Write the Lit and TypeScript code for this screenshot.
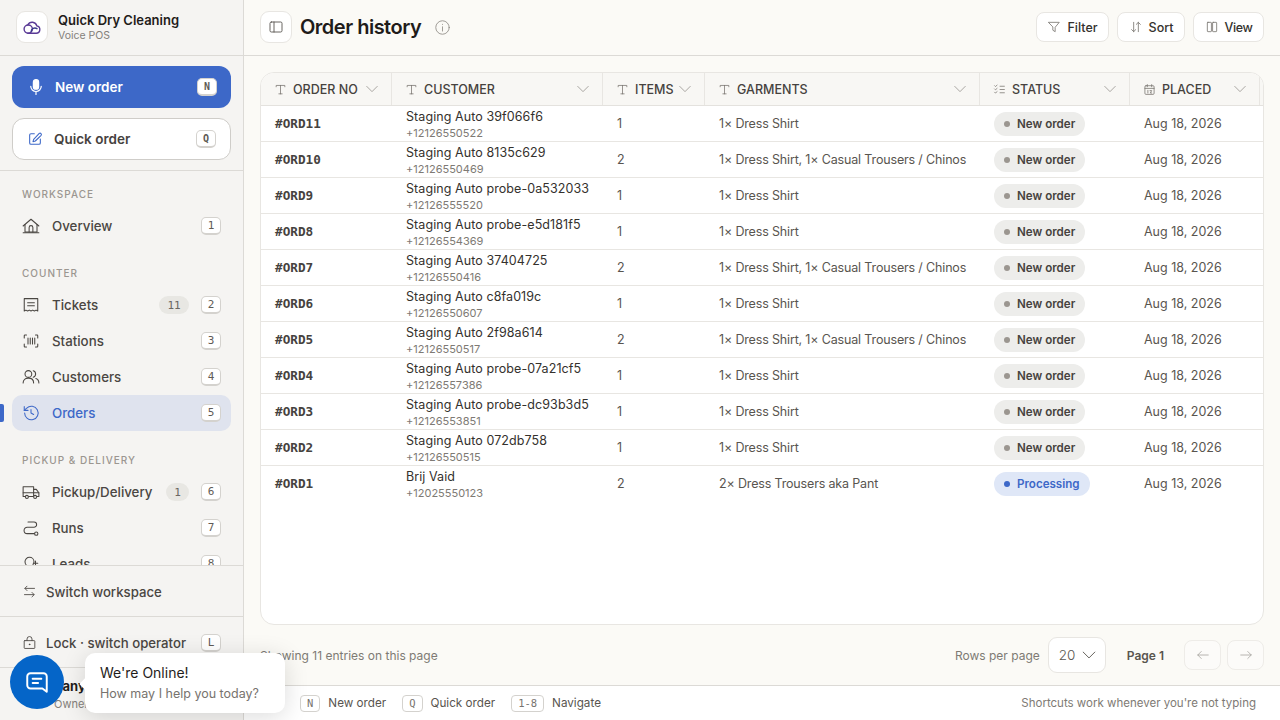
import { LitElement, html, css, svg } from "lit";
import { customElement } from "lit/decorators.js";

const ic = (p: unknown, size = 18, sw = 1.4) => html`<svg class="ic" width=${size} height=${size} viewBox="0 0 24 24" fill="none" stroke="currentColor" stroke-width=${sw} stroke-linecap="round" stroke-linejoin="round">${p}</svg>`;

const I = {
  mic: svg`<rect x="8.5" y="2" width="7" height="13" rx="3.5" fill="currentColor"/><path d="M5 11a7 7 0 0 0 14 0M12 18v4"/>`,
  edit: svg`<path d="M11 4H6a2 2 0 0 0-2 2v12a2 2 0 0 0 2 2h12a2 2 0 0 0 2-2v-6"/><path d="M18.4 3.6a2 2 0 0 1 2.8 2.8L12.5 15 9 16l1-3.500z"/>`,
  home: svg`<path d="M1.500 12 12 3l10.500 9"/><path d="M4 10v10h16V10"/><path d="M1.500 21h21"/><path d="M9.500 20v-6a2.500 2.500 0 0 1 5 0v6"/>`,
  ticket: svg`<path d="M3 3.500h18V20l-2.250-1.200L16.500 20l-2.250-1.200L12 20l-2.250-1.200L7.500 20l-2.250-1.200L3 20z"/><path d="M7.500 9h9M7.500 13h9"/>`,
  scan: svg`<path d="M3 8V5a1 1 0 0 1 1-1h2M18 4h2a1 1 0 0 1 1 1v3M21 16v3a1 1 0 0 1-1 1h-2M6 20H4a1 1 0 0 1-1-1v-3"/><path d="M8 8v8M11 8v8M14 8v8M17 8v8"/>`,
  users: svg`<circle cx="8.500" cy="8" r="4.500"/><path d="M1.500 20c0-4 3-6.500 7-6.500s7 2.500 7 6.500"/><path d="M15 3.700a4.500 4.500 0 0 1 0 8.600M18.500 14c2.500.8 4 3 4 6"/>`,
  history: svg`<path d="M3.500 12a9 9 0 1 0 2.800-6.500L3 8.500"/><path d="M3 3.500v5h5"/><path d="M12 7.500V12l3.500 2"/>`,
  truck: svg`<path d="M1.500 5h14v13h-14z"/><path d="M15.500 8.500h3.500l3.500 4.500v5h-7"/><path d="M1.500 13h21"/><circle cx="6.500" cy="18.500" r="2" fill="#f5f4f2"/><circle cx="17.500" cy="18.500" r="2" fill="#f5f4f2"/>`,
  route: svg`<path d="M8 4h8a3.500 3.500 0 0 1 0 7H7a4 4 0 0 0 0 8.500h9.500"/><circle cx="19" cy="19.500" r="2.200"/>`,
  lead: svg`<circle cx="10" cy="9" r="6"/><path d="M18 8v6M15 11h6"/>`,
  sw: svg`<path d="M20 7H5M8 3.500 4.500 7 8 10.500" /><path d="M4 17h15M16 13.500l3.500 3.500-3.500 3.500"/>`,
  lock: svg`<rect x="3.500" y="9" width="17" height="12.500" rx="1"/><path d="M8 9V6.500a4 4 0 0 1 8 0V9"/><circle cx="12" cy="15" r=".6" fill="currentColor"/>`,
  panel: svg`<rect x="3" y="4.500" width="18" height="15" rx="2"/><path d="M9 4.500v15"/>`,
  info: svg`<circle cx="12" cy="12" r="9.500"/><path d="M12 11v6M12 7.500v.2"/>`,
  filter: svg`<path d="M3 4h18l-7 8.500V20l-4-2.500v-5z"/>`,
  sort: svg`<path d="M8 4v16M4.500 16.500 8 20l3.500-3.500M16 20V4M12.500 7.500 16 4l3.500 3.500"/>`,
  view: svg`<rect x="4" y="4" width="7" height="16" rx="1"/><rect x="13" y="4" width="7" height="16" rx="1"/>`,
  t: svg`<path d="M4 7V4.500h16V7M12 4.500V20M9 20h6"/>`,
  chev: svg`<path d="m5 8.500 7 7 7-7"/>`,
  list: svg`<path d="M13 6h8M13 12h8M13 18h8"/><path d="m3 5 1.500 1.500L7.500 4M3 11l1.500 1.500L7.500 10M3 17l1.500 1.500L7.500 16"/>`,
  cal: svg`<rect x="3.500" y="5" width="17" height="16" rx="2"/><path d="M3.500 10h17M8 3v4M16 3v4"/><path d="M9 13.500v5M13 14h3l-2.500 4.500H16"/>`,
  left: svg`<path d="M21 12H3M9 6l-6 6 6 6"/>`,
  right: svg`<path d="M3 12h18M15 6l6 6-6 6"/>`,
  chat: svg`<path d="M6 4h12a3 3 0 0 1 3 3v14l-4-3H6a3 3 0 0 1-3-3V7a3 3 0 0 1 3-3z"/><path d="M8 9h8M8 13h5"/>`,
};

const rows: [string, string, string, number, string, string, string][] = [
  ["#ORD11", "Staging Auto 39f066f6", "+12126550522", 1, "1× Dress Shirt", "New order", "Aug 18, 2026"],
  ["#ORD10", "Staging Auto 8135c629", "+12126550469", 2, "1× Dress Shirt, 1× Casual Trousers / Chinos", "New order", "Aug 18, 2026"],
  ["#ORD9", "Staging Auto probe-0a532033", "+12126555520", 1, "1× Dress Shirt", "New order", "Aug 18, 2026"],
  ["#ORD8", "Staging Auto probe-e5d181f5", "+12126554369", 1, "1× Dress Shirt", "New order", "Aug 18, 2026"],
  ["#ORD7", "Staging Auto 37404725", "+12126550416", 2, "1× Dress Shirt, 1× Casual Trousers / Chinos", "New order", "Aug 18, 2026"],
  ["#ORD6", "Staging Auto c8fa019c", "+12126550607", 1, "1× Dress Shirt", "New order", "Aug 18, 2026"],
  ["#ORD5", "Staging Auto 2f98a614", "+12126550517", 2, "1× Dress Shirt, 1× Casual Trousers / Chinos", "New order", "Aug 18, 2026"],
  ["#ORD4", "Staging Auto probe-07a21cf5", "+12126557386", 1, "1× Dress Shirt", "New order", "Aug 18, 2026"],
  ["#ORD3", "Staging Auto probe-dc93b3d5", "+12126553851", 1, "1× Dress Shirt", "New order", "Aug 18, 2026"],
  ["#ORD2", "Staging Auto 072db758", "+12126550515", 1, "1× Dress Shirt", "New order", "Aug 18, 2026"],
  ["#ORD1", "Brij Vaid", "+12025550123", 2, "2× Dress Trousers aka Pant", "Processing", "Aug 13, 2026"],
];

const cols: [string, unknown][] = [
  ["ORDER NO", I.t], ["CUSTOMER", I.t], ["ITEMS", I.t], ["GARMENTS", I.t], ["STATUS", I.list], ["PLACED", I.cal],
];

@customElement("app-root")
export class AppRoot extends LitElement {
  static styles = css`
    :host { display: flex; width: 1280px; height: 720px; overflow: hidden; position: relative; font-family: Inter, "Liberation Sans", sans-serif; color: #1f1c1a; background: #fbfaf6; }
    * { box-sizing: border-box; }
    .ic { display: block; flex: none; }

    aside { width: 244px; flex: none; background: #f5f4f2; border-right: 1px solid #dcdad6; display: flex; flex-direction: column; height: 720px; }
    .brand { height: 56px; flex: none; border-bottom: 1px solid #dcdad6; display: flex; align-items: center; gap: 10px; padding: 0 16px 1px; }
    .logo { width: 32px; height: 32px; border-radius: 9px; background: #fff; border: 1px solid #e8e6e2; display: flex; align-items: center; justify-content: center; }
    .brand b { display: block; font-size: 13px; font-weight: 600; line-height: 17px; }
    .brand span { display: block; font-size: 10.500px; line-height: 13px; color: #84807a; }
    .cta { flex: none; height: 115px; padding: 10px 12px; border-bottom: 1px solid #dcdad6; display: flex; flex-direction: column; gap: 10px; }
    .btn { height: 42px; border-radius: 12px; display: flex; align-items: center; font-size: 13.500px; font-weight: 600; padding: 0 14px 0 15px; }
    .btn .g { flex: 1; }
    .btn.pri { background: #3d68c8; color: #fff; gap: 10px; }
    .btn.sec { background: #fff; border: 1px solid #cfcdc9; color: #46423e; gap: 11px; padding-left: 14px; }
    kbd { font-family: "DejaVu Sans Mono", "Liberation Mono", monospace; font-size: 11px; font-weight: 400; color: #5f5b56; display: flex; align-items: center; justify-content: center; flex: none; height: 18px; min-width: 20px; padding: 0 5px; border-radius: 5px; background: #fff; border: 1px solid #d4d2ce; border-bottom-width: 2px; }
    .btn kbd { font-weight: 700; font-size: 10px; }
    .nav { flex: 1; min-height: 0; overflow: hidden; padding: 0 12px; }
    .lab { font-size: 10px; font-weight: 500; letter-spacing: .1em; color: #9b9690; height: 14px; line-height: 14px; padding-left: 10px; }
    .lab.first { margin-top: 16px; }
    .lab.next { margin-top: 22px; }
    .lab + .it { margin-top: 7px; }
    .it { height: 36px; border-radius: 10px; display: flex; align-items: center; padding: 0 10px; font-size: 13.300px; color: #4a4642; gap: 12px; position: relative; font-weight: 450; }
    .it .g { flex: 1; white-space: nowrap; }
    .it.on { background: #dfe3ee; color: #3d68c8; font-weight: 500; }
    .it.on::before { content: ""; position: absolute; left: -12px; top: 9px; width: 4px; height: 18px; background: #3d68c8; border-radius: 0 2px 2px 0; }
    .cnt { font-family: "DejaVu Sans Mono", monospace; font-size: 11px; color: #6b6762; background: #e8e7e3; border-radius: 9px; height: 18px; display: flex; flex: none; align-items: center; justify-content: center; }
    .sec-row { flex: none; height: 51px; border-top: 1px solid #dcdad6; display: flex; align-items: center; gap: 9px; padding: 1px 22px 0; font-size: 13.200px; color: #4a4642; font-weight: 450; }
    .sec-row .g { flex: 1; white-space: nowrap; }
    .user { flex: none; height: 53px; border-top: 1px solid #dcdad6; padding: 10px 0 0 54px; overflow: hidden; }
    .user b { display: block; font-size: 13px; line-height: 16px; font-weight: 700; white-space: nowrap; }
    .user span { display: block; font-size: 11px; line-height: 14px; margin-top: 3px; color: #84807a; }

    main { flex: 1; min-width: 0; display: flex; flex-direction: column; }
    header { height: 56px; flex: none; border-bottom: 1px solid #dcdad6; display: flex; align-items: center; padding: 0 16px 1px; gap: 8px; }
    .sq { width: 32px; height: 32px; background: #fff; border: 1px solid #e8e6e2; border-radius: 9px; display: flex; align-items: center; justify-content: center; color: #5d5955; }
    h1 { font-size: 20px; font-weight: 600; margin: 0; letter-spacing: -.025em; color: #1f1c1a; }
    .inf { color: #8f8b85; margin-left: 5px; }
    .tb { height: 30px; padding: 0 10.500px; border-radius: 8px; background: #fff; border: 1px solid #e8e6e2; display: flex; align-items: center; justify-content: center; gap: 6px; font-size: 12.500px; font-weight: 500; color: #34312d; }
    .tb .ic { color: #77736e; }
    .tb.sort { min-width: 68px; }
    .tb.view { letter-spacing: -.4px; }
    .g { flex: 1; }

    .content { flex: 1; min-height: 0; padding: 16px 16px 0; display: flex; flex-direction: column; }
    .card { height: 553px; flex: none; background: #fff; border: 1px solid #e8e6e2; border-radius: 14px; overflow: hidden; }
    .hr, .tr { display: grid; grid-template-columns: 131px 211px 102px 275px 150px 130px; }
    .hr { height: 33px; background: #f8f7f4; border-bottom: 1px solid #e4e2de; }
    .th { display: flex; align-items: center; padding: 0 10px 0 13px; border-right: 1px solid #e8e6e2; font-size: 12.500px; color: #46423e; font-weight: 450; white-space: nowrap; }
    .th .t { color: #77736e; margin-right: 6px; }
    .th .c { color: #8f8b85; margin-left: auto; }
    .tr { height: 36px; border-bottom: 1px solid #e8e6e2; align-items: center; font-size: 12.500px; color: #59554f; }
    .tr:last-child { border-bottom: none; padding-bottom: 1px; }
    .td { padding-left: 14px; }
    .td.who { padding-top: 1px; }
    .tr .ord { font-family: "DejaVu Sans Mono", monospace; font-weight: 700; font-size: 12.700px; color: #46423e; }
    .tr .nm { color: #34312d; font-size: 12.500px; line-height: 15px; letter-spacing: .08px; }
    .tr .ph { color: #7e7a74; font-size: 11px; line-height: 13px; margin-top: 3px; }
    .tr .gm { letter-spacing: -.16px; }
    .pill { display: inline-flex; align-items: center; gap: 7px; height: 24px; padding: 0 10px; border-radius: 12px; background: #ededeb; color: #46423e; font-size: 11.600px; font-weight: 600; }
    .pill i { width: 6px; height: 6px; border-radius: 50%; background: #9b9690; }
    .pill.p { background: #dfe7f7; color: #3d68c8; }
    .pill.p i { background: #3d68c8; }

    .pager { height: 60px; flex: none; display: flex; align-items: center; font-size: 12px; color: #7e7a74; }
    .sel { width: 58px; height: 36px; background: #fff; border: 1px solid #e8e6e2; border-radius: 9px; display: flex; align-items: center; padding-left: 10px; gap: 4px; font-size: 13.500px; font-weight: 300; color: #59554f; margin: 0 21px 0 8px; }
    .pg { font-weight: 600; color: #59554f; margin-right: 14px; }
    .ar { width: 37px; height: 30px; border: 1px solid #eeece8; border-radius: 8px; display: flex; align-items: center; justify-content: center; color: #a3a09a; margin-left: 6px; background: #fcfbf9; }

    footer { height: 35px; flex: none; background: #fff; border-top: 1px solid #dcdad6; display: flex; align-items: center; padding: 0 24px 0 56px; font-size: 11.700px; color: #59554f; }
    footer kbd { height: 17px; border-radius: 4px; font-size: 10.500px; color: #77736e; margin-right: 8px; border-bottom-width: 1px; padding: 0 6px; }
    footer .s { margin-right: 16px; }
    footer .r { margin-left: auto; color: #7e7a74; font-size: 11.500px; }

    .chat { position: absolute; left: 10px; top: 655px; width: 54px; height: 54px; border-radius: 50%; background: #0565c8; color: #fff; display: flex; align-items: center; justify-content: center; }
    .pop { position: absolute; left: 85px; top: 653px; width: 200px; height: 60px; border-radius: 10px; background: #fff; box-shadow: 0 4px 24px rgba(0,0,0,.14); padding: 11px 15px; }
    .pop b { display: block; font-weight: 400; font-size: 14px; line-height: 18px; color: #1f1c1a; }
    .pop span { display: block; font-size: 12.500px; line-height: 16px; margin-top: 4px; color: #77736e; }
    .pop::before { content: ""; position: absolute; left: -4px; top: 27px; width: 8px; height: 8px; background: #fff; transform: rotate(45deg); }
  `;

  private item(label: string, icon: unknown, k: string, opts: { on?: boolean; cnt?: string; w?: number } = {}) {
    return html`<div class="it ${opts.on ? "on" : ""}">${ic(icon)}<span class="g">${label}</span>${opts.cnt ? html`<span class="cnt" style="width:${opts.w}px">${opts.cnt}</span>` : ""}<kbd>${k}</kbd></div>`;
  }

  render() {
    return html`
      <aside>
        <div class="brand">
          <div class="logo"><svg width="20" height="20" viewBox="0 0 24 24" fill="none" stroke="#5a3a96" stroke-width="1.700" stroke-linecap="round"><path d="M7 19.500h10a4.500 4.500 0 0 0 .8-8.900A5.800 5.800 0 0 0 7 9.500"/><circle cx="7.500" cy="14.500" r="5"/><path d="M11 17.500a4.500 4.500 0 0 1 7-3.500" stroke="#3b3a8a"/></svg></div>
          <div><b>Quick Dry Cleaning</b><span>Voice POS</span></div>
        </div>
        <div class="cta">
          <div class="btn pri">${ic(I.mic, 18, 1.6)}<span class="g">New order</span><kbd>N</kbd></div>
          <div class="btn sec"><span style="color:#3d68c8">${ic(I.edit, 16, 1.6)}</span><span class="g">Quick order</span><kbd>Q</kbd></div>
        </div>
        <div class="nav">
          <div class="lab first">WORKSPACE</div>
          ${this.item("Overview", I.home, "1")}
          <div class="lab next">COUNTER</div>
          ${this.item("Tickets", I.ticket, "2", { cnt: "11", w: 30 })}
          ${this.item("Stations", I.scan, "3")}
          ${this.item("Customers", I.users, "4")}
          ${this.item("Orders", I.history, "5", { on: true })}
          <div class="lab next">PICKUP &amp; DELIVERY</div>
          ${this.item("Pickup/Delivery", I.truck, "6", { cnt: "1", w: 23 })}
          ${this.item("Runs", I.route, "7")}
          ${this.item("Leads", I.lead, "8")}
        </div>
        <div class="sec-row">${ic(I.sw, 15)}<span class="g">Switch workspace</span></div>
        <div class="sec-row">${ic(I.lock, 15)}<span class="g">Lock · switch operator</span><kbd>L</kbd></div>
        <div class="user"><b>Sanyam Kumar</b><span>Owner</span></div>
      </aside>
      <main>
        <header>
          <div class="sq">${ic(I.panel, 16)}</div>
          <h1>Order history</h1>
          <span class="inf">${ic(I.info, 17, 1.2)}</span>
          <span class="g"></span>
          <div class="tb">${ic(I.filter, 14)}Filter</div>
          <div class="tb sort">${ic(I.sort, 14)}Sort</div>
          <div class="tb view">${ic(I.view, 14)}View</div>
        </header>
        <div class="content">
          <div class="card">
            <div class="hr">
              ${cols.map(([n, i]) => html`<div class="th"><span class="t">${ic(i, 13, 1.4)}</span><span>${n}</span><span class="c">${ic(I.chev, 18, 1)}</span></div>`)}
            </div>
            ${rows.map((r) => html`<div class="tr">
              <div class="td ord">${r[0]}</div>
              <div class="td who"><div class="nm">${r[1]}</div><div class="ph">${r[2]}</div></div>
              <div class="td">${r[3]}</div>
              <div class="td gm">${r[4]}</div>
              <div class="td"><span class="pill ${r[5] === "Processing" ? "p" : ""}"><i></i>${r[5]}</span></div>
              <div class="td">${r[6]}</div>
            </div>`)}
          </div>
          <div class="pager">
            <span>Showing 11 entries on this page</span>
            <span class="g"></span>
            <span>Rows per page</span>
            <div class="sel">20 ${ic(I.chev, 20, 1.1)}</div>
            <span class="pg">Page 1</span>
            <div class="ar">${ic(I.left, 14, 1.3)}</div>
            <div class="ar">${ic(I.right, 14, 1.3)}</div>
          </div>
        </div>
        <footer>
          <kbd>N</kbd><span class="s">New order</span>
          <kbd>Q</kbd><span class="s">Quick order</span>
          <kbd>1-8</kbd><span>Navigate</span>
          <span class="r">Shortcuts work whenever you're not typing</span>
        </footer>
      </main>
      <div class="chat">${ic(I.chat, 26, 1.8)}</div>
      <div class="pop"><b>We're Online!</b><span>How may I help you today?</span></div>
    `;
  }
}
